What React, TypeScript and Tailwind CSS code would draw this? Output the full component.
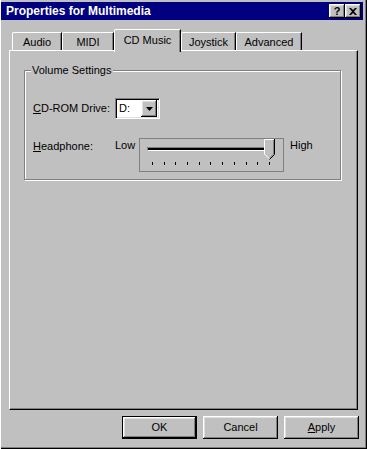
const bevel =
  "shadow-[inset_-1px_-1px_#000,inset_1px_1px_#fff,inset_-2px_-2px_#808080,inset_2px_2px_#dfdfdf]";

function TitleButton({ children }: { children: React.ReactNode }) {
  return (
    <div
      className={`w-[16px] h-[14px] bg-[#c0c0c0] flex items-center justify-center text-black font-bold text-[11px] leading-[11px] ${bevel}`}
    >
      {children}
    </div>
  );
}

function Tab({ label, active, width }: { label: string; active?: boolean; width: string }) {
  if (active) {
    return (
      <div
        className={`${width} h-[23px] -mb-[2px] relative z-10 bg-[#c0c0c0] border-l border-t border-white rounded-tl-[2px] border-r border-r-black shadow-[inset_-1px_0_#808080] pt-[4px] text-center`}
      >
        {label}
      </div>
    );
  }
  return (
    <div
      className={`${width} h-[18px] bg-[#c0c0c0] border-l border-t border-white rounded-tl-[2px] border-r border-r-black shadow-[inset_-1px_0_#808080] pt-[3px] text-center`}
    >
      {label}
    </div>
  );
}

function Button({ label, isDefault }: { label: React.ReactNode; isDefault?: boolean }) {
  return (
    <div
      className={`w-[75px] h-[23px] flex items-center justify-center bg-[#c0c0c0] ${
        isDefault ? "border border-black" : ""
      } ${bevel}`}
    >
      {label}
    </div>
  );
}

function Slider() {
  const ticks = Array.from({ length: 11 });
  return (
    <div className="relative w-[145px] h-[34px] border border-[#808080]">
      <div className="ml-[7px] mt-[8px] w-[125px] h-[4px] border-t border-l border-[#808080] border-b border-r border-b-white border-r-white bg-black" />
      <div className="ml-[12px] mt-[11px] w-[118px] h-[3px] flex justify-between">
        {ticks.map((_, i) => (
          <div key={i} className="w-[1px] h-[3px] bg-black" />
        ))}
      </div>
      <svg className="absolute left-[124px] top-0" width="11" height="21" viewBox="0 0 11 21">
        <polygon points="0,0 11,0 11,15 5.5,20.5 0,15" fill="#c0c0c0" />
        <polyline points="0.5,15 0.5,0.5 10,0.5" fill="none" stroke="#fff" />
        <polyline points="0.5,15 5,19.5" fill="none" stroke="#fff" />
        <polyline points="9.5,1 9.5,15 5.5,19" fill="none" stroke="#808080" />
        <polyline points="10.5,0 10.5,15.5 5.5,20.5" fill="none" stroke="#000" />
      </svg>
    </div>
  );
}

export default function App() {
  return (
    <div className="w-[367px] h-[449px] bg-[#c0c0c0] text-black text-[11px] leading-[13px] font-['Liberation_Sans',Arial,sans-serif] shadow-[inset_1px_0_#fff,inset_-1px_-1px_#000,inset_-2px_-2px_#808080] pt-[2px] flex flex-col">
      {/* title bar */}
      <div className="ml-[1px] w-[362px] h-[18px] bg-[#000080] flex items-center justify-between pl-[5px] pr-[2px]">
        <span className="text-white font-bold text-[12px]">Properties for Multimedia</span>
        <div className="flex">
          <TitleButton>?</TitleButton>
          <TitleButton>
            <svg width="8" height="7" viewBox="0 0 8 7">
              <path d="M0 0h2l2 2 2-2h2L5 3.5 8 7H6L4 5 2 7H0l3-3.5z" fill="#000" />
            </svg>
          </TitleButton>
        </div>
      </div>

      <div className="pl-[9px]">
        {/* tabs */}
        <div className="mt-[9px] ml-[3px] h-[21px] flex items-end">
          <Tab label="Audio" width="w-[50px]" />
          <Tab label="MIDI" width="w-[52px]" />
          <Tab label="CD Music" width="w-[67px]" active />
          <Tab label="Joystick" width="w-[55px]" />
          <Tab label="Advanced" width="w-[66px]" />
        </div>

        {/* panel */}
        <div className="w-[349px] h-[360px] border-l border-t border-white border-r border-b border-r-black border-b-black shadow-[inset_-1px_-1px_#808080] pt-[19px] pl-[14px]">
          <div className="relative w-[317px] h-[110px] border border-[#808080] shadow-[1px_1px_0_#fff,inset_1px_1px_0_#fff] pt-[27px] pl-[8px]">
            <span className="absolute -top-[7px] left-[6px] px-[1px] bg-[#c0c0c0]">Volume Settings</span>

            <div className="flex items-center">
              <div className="w-[82px]">
                <u>C</u>D-ROM Drive:
              </div>
              <div className="w-[45px] h-[21px] bg-white border-t border-l border-[#808080] border-b border-r border-b-white border-r-white shadow-[inset_1px_1px_#000,inset_-1px_-1px_#dfdfdf] flex items-center justify-between pl-[3px] pr-[2px]">
                <span>D:</span>
                <div className={`w-[16px] h-[17px] bg-[#c0c0c0] flex items-center justify-center ${bevel}`}>
                  <svg width="7" height="4" viewBox="0 0 7 4">
                    <path d="M0 0h7L3.5 4z" fill="#000" />
                  </svg>
                </div>
              </div>
            </div>

            <div className="flex mt-[19px]">
              <div className="w-[82px] pt-[2px]">
                <u>H</u>eadphone:
              </div>
              <div className="w-[24px] pt-[1px]">Low</div>
              <Slider />
              <div className="ml-[6px] pt-[1px]">High</div>
            </div>
          </div>
        </div>

        {/* buttons */}
        <div className="mt-[6px] ml-[113px] flex gap-[6px]">
          <Button label="OK" isDefault />
          <Button label="Cancel" />
          <Button
            label={
              <span>
                <u>A</u>pply
              </span>
            }
          />
        </div>
      </div>
    </div>
  );
}
